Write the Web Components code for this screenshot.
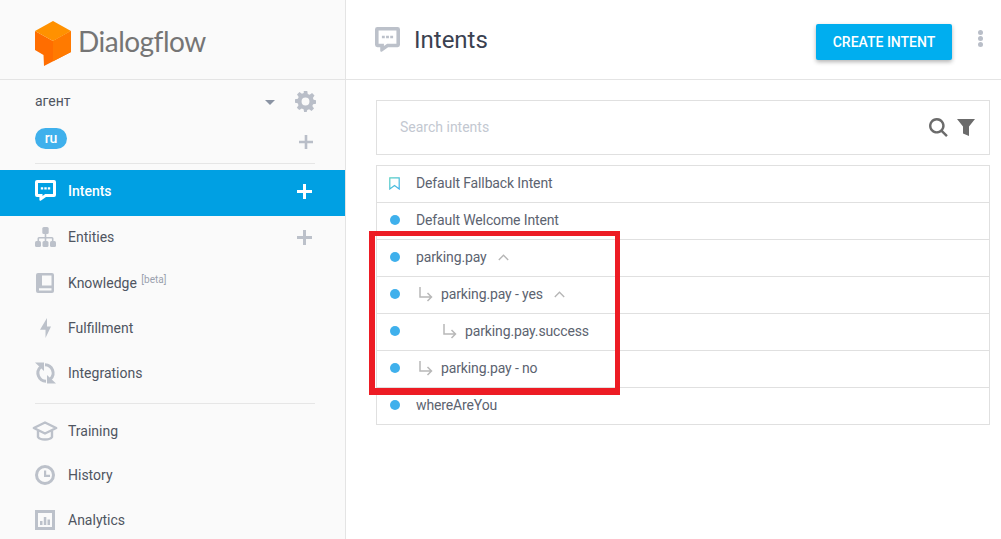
<!DOCTYPE html>
<html>
<head>
<meta charset="utf-8">
<title>Dialogflow</title>
<style>
  html, body { margin: 0; padding: 0; height: 100%; overflow: hidden; background: #fff; }
  body { font-family: Roboto, "Liberation Sans", sans-serif; font-size: 14px; color: #4f5561; }
</style>
</head>
<body>
<df-app>
  <df-sidebar slot="side">
    <df-nav-item active icon="intents" plus style="height:46px">Intents</df-nav-item>
    <df-nav-item icon="entities" plus style="height:46px">Entities</df-nav-item>
    <df-nav-item icon="knowledge" beta style="height:46px">Knowledge</df-nav-item>
    <df-nav-item icon="fulfillment" style="height:45px">Fulfillment</df-nav-item>
    <df-nav-item icon="integrations" style="height:45px">Integrations</df-nav-item>
    <df-nav-item icon="training" divider style="height:44px;margin-top:13px">Training</df-nav-item>
    <df-nav-item icon="history" style="height:44px">History</df-nav-item>
    <df-nav-item icon="analytics" style="height:47px">Analytics</df-nav-item>
  </df-sidebar>
  <df-main slot="main">
    <df-intent-row kind="bookmark">Default Fallback Intent</df-intent-row>
    <df-intent-row>Default Welcome Intent</df-intent-row>
    <df-intent-row open>parking.pay</df-intent-row>
    <df-intent-row level="1" open>parking.pay - yes</df-intent-row>
    <df-intent-row level="2">parking.pay.success</df-intent-row>
    <df-intent-row level="1">parking.pay - no</df-intent-row>
    <df-intent-row>whereAreYou</df-intent-row>
  </df-main>
</df-app>

<script>
// viewBox is [w, h], each icon is drawn at its pixel size in the sidebar
const ICONS = {
  intents: [21, 21, '<path fill-rule="evenodd" d="M2 0h17a2 2 0 0 1 2 2v13a2 2 0 0 1-2 2H11l-5 3.600a1 1 0 0 1-1.600-.8V17H2a2 2 0 0 1-2-2V2a2 2 0 0 1 2-2zM3 3v11h4.500v2l2.700-2H18V3z"/><path d="M5.800 7.300h2.400v2.200H5.800zM9.300 7.300h2.400v2.200H9.300zM12.800 7.300h2.400v2.200h-2.400z"/>'],
  entities: [21, 20, '<rect x="7.300" y="0" width="6.400" height="7" rx="1.500"/><path d="M9.700 6h1.600v4H17a1.500 1.500 0 0 1 1.500 1.500V15h-1.600v-3.400h-5.600V15H9.700v-3.400H4.100V15H2.500v-3.500A1.500 1.500 0 0 1 4 10h5.700z"/><rect x="0" y="14" width="6" height="6" rx="1.500"/><rect x="7.500" y="14" width="6" height="6" rx="1.500"/><rect x="15" y="14" width="6" height="6" rx="1.500"/>'],
  knowledge: [18, 20, '<path fill-rule="evenodd" d="M2 0h14a2 2 0 0 1 2 2v16a2 2 0 0 1-2 2H2a2 2 0 0 1-2-2V2a2 2 0 0 1 2-2zM6 2.500v10h9.500v-10zM3 15.300v2.200h12.500v-2.200z"/>'],
  fulfillment: [11, 20, '<path d="M7 0v8.500h4L5.500 20v-8.300H0z"/>'],
  integrations: [21, 22, '<g fill="none" stroke="currentColor" stroke-width="3"><path d="M5.500 5A8.300 8.300 0 0 0 11 19.300"/><path d="M15.500 17A8.300 8.300 0 0 0 10 2.700"/></g><path d="M0 .5h9v8.500zM21 21.500h-9V13z"/>'],
  training: [26, 20, '<path fill="none" stroke="currentColor" stroke-width="2.400" stroke-linejoin="round" d="M13 1.500 1.800 7 13 12.500 24.200 7zM6 10v6c2 3.400 12 3.400 14 0v-6"/>'],
  history: [20, 20, '<path fill-rule="evenodd" d="M10 0a10 10 0 1 1 0 20 10 10 0 0 1 0-20zm0 3a7 7 0 1 0 0 14 7 7 0 0 0 0-14z"/><path d="M9 5.500h2.200v4.300h3.800v2.200H9z"/>'],
  analytics: [20, 20, '<path fill-rule="evenodd" d="M0 0h20v20H0zM3 3v14h14V3z"/><path d="M5 11h2.500v4H5zM8.800 7h2.500v8H8.800zM12.500 9.500H15V15h-2.500z"/>']
};

class DfApp extends HTMLElement {
  connectedCallback() {
    this.attachShadow({ mode: 'open' });
    this.shadowRoot.innerHTML = `
      <style>
        :host { display: grid; grid-template-columns: 346px 1fr; width: 1001px; height: 539px; overflow: hidden; }
      </style>
      <slot name="side"></slot>
      <slot name="main"></slot>
    `;
  }
}

class DfSidebar extends HTMLElement {
  connectedCallback() {
    this.attachShadow({ mode: 'open' });
    this.shadowRoot.innerHTML = `
      <style>
        :host { display: block; height: 539px; overflow: hidden; box-sizing: border-box; background: #fafafa; border-right: 1px solid #e4e4e4; }
        .logo { height: 80px; box-sizing: border-box; border-bottom: 1px solid #e4e4e4; display: flex; align-items: center; padding: 2px 0 0 35px; gap: 7px; }
        .logo svg { margin-top: 6px; }
        .logo span { font: 400 28px Lato, Roboto, sans-serif; color: #757575; letter-spacing: -0.5px; }
        .agent { height: 84px; margin: 0 30px 0 35px; box-sizing: border-box; border-bottom: 1px solid #e6e6e6; }
        .row { display: flex; align-items: center; justify-content: space-between; color: #4f5561; font-size: 14px; }
        .row.top { height: 42px; }
        .row.top > span:first-child { margin-top: -1px; }
        .row.bottom { height: 36px; }
        .right { display: flex; align-items: center; gap: 20px; margin-right: -1px; }
        .caret { width: 0; height: 0; border: 5px solid transparent; border-top: 5px solid #8a93a3; border-bottom: 0; margin-top: 3px; }
        .pill { background: #3fb0ec; color: #fff; font-weight: 500; border-radius: 11px; width: 32px; height: 21px; line-height: 21px; text-align: center; font-size: 14px; margin-top: -4px; }
        .plus { margin-right: 2px; color: #b9bec8; margin-top: 3px; }
        svg { display: block; fill: currentColor; }
        .nav { margin-top: 6px; }
      </style>
      <div class="logo">
        <svg width="36" height="45" viewBox="0 0 36 45">
          <path fill="#ff6d00" d="M0 10 18 20 36 10v21L9 45 8.500 34 0 29z"/>
          <path fill="#ff7a00" d="M18 20 36 10v21L18 40.300z"/>
          <path fill="#ff9100" d="M18 0 36 10 18 20 0 10z"/>
        </svg>
        <span>Dialogflow</span>
      </div>
      <div class="agent">
        <div class="row top">
          <span>агент</span>
          <span class="right">
            <span class="caret"></span>
            <svg width="21" height="21" viewBox="0 0 24 24" style="color:#b9bec8"><path fill-rule="evenodd" d="M10 0h4l.6 3.300 2.100.9L19.500 2.300l2.800 2.800-1.900 2.800.9 2.100L24 10.500v4l-3.300.6-.9 2.100 1.900 2.800-2.800 2.800-2.800-1.900-2.100.9L13.400 24h-3l-.6-3.200-2.100-.9-2.800 1.900-2.800-2.800 1.900-2.800-.9-2.100L0 13.500v-4l3.300-.6.9-2.100L2.300 4l2.800-2.800 2.800 1.900 2.100-.9zM12 7.500a4.500 4.500 0 1 0 0 9 4.500 4.500 0 0 0 0-9z"/></svg>
          </span>
        </div>
        <div class="row bottom">
          <span class="pill">ru</span>
          <span class="plus"><svg width="14" height="14" viewBox="0 0 14 14"><path d="M5.700 0h2.600v5.700H14v2.600H8.300V14H5.700V8.300H0V5.700h5.700z"/></svg></span>
        </div>
      </div>
      <div class="nav"><slot></slot></div>
    `;
  }
}

class DfNavItem extends HTMLElement {
  connectedCallback() {
    const [w, h, body] = ICONS[this.getAttribute('icon')];
    this.attachShadow({ mode: 'open' });
    this.shadowRoot.innerHTML = `
      <style>
        :host { display: flex; align-items: center; position: relative; padding: 0 33px 0 33px; color: #4f5561; font-size: 14px; }
        :host([active]) { background: #00a0e3; color: #fff; font-weight: 500; }
        .ico { width: 24px; margin-right: 11px; flex: none; display: flex; justify-content: center; color: #bcc1ca; margin-top: -5px; }
        :host([active]) .ico { color: #fff; }
        .ico svg { display: block; fill: currentColor; overflow: visible; }
        .label { flex: 1; margin-top: -5px; }
        sup { font-size: 10px; color: #9aa1ae; line-height: 0; vertical-align: 5px; margin-left: 1px; }
        .plus { color: #bcc1ca; margin-top: -3px; }
        :host([active]) .plus { color: #fff; }
        .plus svg { display: block; fill: currentColor; }
        .rule { position: absolute; left: 35px; right: 30px; top: -8px; height: 1px; background: #e6e6e6; }
      </style>
      ${this.hasAttribute('divider') ? '<div class="rule"></div>' : ''}
      <span class="ico"><svg width="${w}" height="${h}" viewBox="0 0 ${w} ${h}">${body}</svg></span>
      <span class="label"><slot></slot>${this.hasAttribute('beta') ? ' <sup>[beta]</sup>' : ''}</span>
      ${this.hasAttribute('plus') ? '<span class="plus"><svg width="15" height="15" viewBox="0 0 14 14"><path d="M5.600 0h2.800v5.600H14v2.800H8.400V14H5.600V8.400H0V5.600h5.600z"/></svg></span>' : ''}
    `;
  }
}

class DfMain extends HTMLElement {
  connectedCallback() {
    this.attachShadow({ mode: 'open' });
    this.shadowRoot.innerHTML = `
      <style>
        :host { display: block; position: relative; height: 539px; background: #fff; }
        header { height: 80px; box-sizing: border-box; border-bottom: 1px solid #e4e4e4; display: flex; align-items: center; padding: 0 15px 0 29px; }
        h1 { margin: 0 0 0 14px; font: 400 24px Roboto, sans-serif; color: #3a4150; flex: 1; }
        .head-ico { color: #bcc1ca; margin-top: -1px; }
        svg { display: block; fill: currentColor; }
        button { width: 136px; height: 36px; margin-top: 4px; border: 0; border-radius: 2px; background: #00aeef; color: #fff; font: 500 14px Roboto, sans-serif; padding: 0; box-shadow: 0 2px 4px rgba(0,0,0,.3); }
        .more { margin-left: 26px; margin-top: -2px; display: flex; flex-direction: column; gap: 1px; margin-right: 3px; }
        .more i { display: block; width: 5px; height: 5px; border-radius: 50%; background: #b9bec8; }
        .content { padding: 20px 11px 0 30px; }
        .search { height: 55px; box-sizing: border-box; border: 1px solid #e0e0e0; display: flex; align-items: center; padding: 0 14px 0 23px; color: #c3c8d1; font-size: 14px; margin-bottom: 10px; }
        .search span { flex: 1; margin-top: -2px; }
        .list { border: 1px solid #e0e0e0; border-bottom: 0; }
        .mark { position: absolute; left: 23px; top: 231px; width: 240px; height: 152px; border: solid #ed1c24; border-width: 5px 5px 7px 6px; box-sizing: content-box; pointer-events: none; }
      </style>
      <header>
        <span class="head-ico"><svg width="25" height="25" viewBox="0 0 21 21">${ICONS.intents[2]}</svg></span>
        <h1>Intents</h1>
        <button>CREATE INTENT</button>
        <span class="more"><i></i><i></i><i></i></span>
      </header>
      <div class="content">
        <div class="search">
          <span>Search intents</span>
          <svg width="19" height="19" viewBox="0 0 19 19" style="color:#6b6b6b"><path fill-rule="evenodd" d="M7.800 0a7.800 7.800 0 0 1 6.200 12.500l4.800 4.800-1.700 1.700-4.800-4.800A7.800 7.800 0 1 1 7.800 0zm0 2.400a5.400 5.400 0 1 0 0 10.800 5.400 5.400 0 0 0 0-10.800z"/></svg>
          <svg width="18" height="17" viewBox="0 0 18 17" style="color:#6b6b6b;margin-left:9px"><path d="M0 0h18l-6 7.500V17l-6-2.500V7.500z"/></svg>
        </div>
        <div class="list"><slot></slot></div>
      </div>
      <div class="mark"></div>
    `;
  }
}

class DfIntentRow extends HTMLElement {
  connectedCallback() {
    const level = +(this.getAttribute('level') || 0);
    const marker = this.getAttribute('kind') === 'bookmark'
      ? '<svg width="11" height="13" viewBox="0 0 11 13"><defs><linearGradient id="b" x1="0" x2="1" y1="0" y2="1"><stop offset="0" stop-color="#58d0c0"/><stop offset="1" stop-color="#3fb0ec"/></linearGradient></defs><path fill="none" stroke="url(#b)" stroke-width="1.200" d="M.8.800h9.400v11.200L5.500 8.600.8 12z"/></svg>'
      : '<span class="dot"></span>';
    this.attachShadow({ mode: 'open' });
    this.shadowRoot.innerHTML = `
      <style>
        :host { display: flex; align-items: center; height: 37px; box-sizing: border-box; border-bottom: 1px solid #e0e0e0; padding: 0 0 2px 12px; color: #5c6370; font-size: 14px; letter-spacing: -0.13px; }
        .mark { width: 11px; display: flex; justify-content: center; flex: none; margin-right: 16px; }
        .dot { width: 10px; height: 10px; border-radius: 50%; background: #3fb0ec; }
        .arrow { flex: none; margin-right: 8px; display: block; }
        .chev { margin-left: 11px; display: block; }
        svg { fill: none; }
      </style>
      <span class="mark">${marker}</span>
      ${level ? `<svg class="arrow" style="margin-left:${(level - 1) * 24 + 3}px" width="14" height="15" viewBox="0 0 14 15"><path stroke="#b8b8b8" stroke-width="1.500" d="M1 0v10h11M8.500 6l4 4-4 4"/></svg>` : ''}
      <slot></slot>
      ${this.hasAttribute('open') ? '<svg class="chev" width="11" height="7" viewBox="0 0 11 7"><path stroke="#b5b5b5" stroke-width="1.300" d="M.8 6 5.500 1.200 10.200 6"/></svg>' : ''}
    `;
  }
}

customElements.define('df-app', DfApp);
customElements.define('df-sidebar', DfSidebar);
customElements.define('df-nav-item', DfNavItem);
customElements.define('df-main', DfMain);
customElements.define('df-intent-row', DfIntentRow);
</script>
</body>
</html>
